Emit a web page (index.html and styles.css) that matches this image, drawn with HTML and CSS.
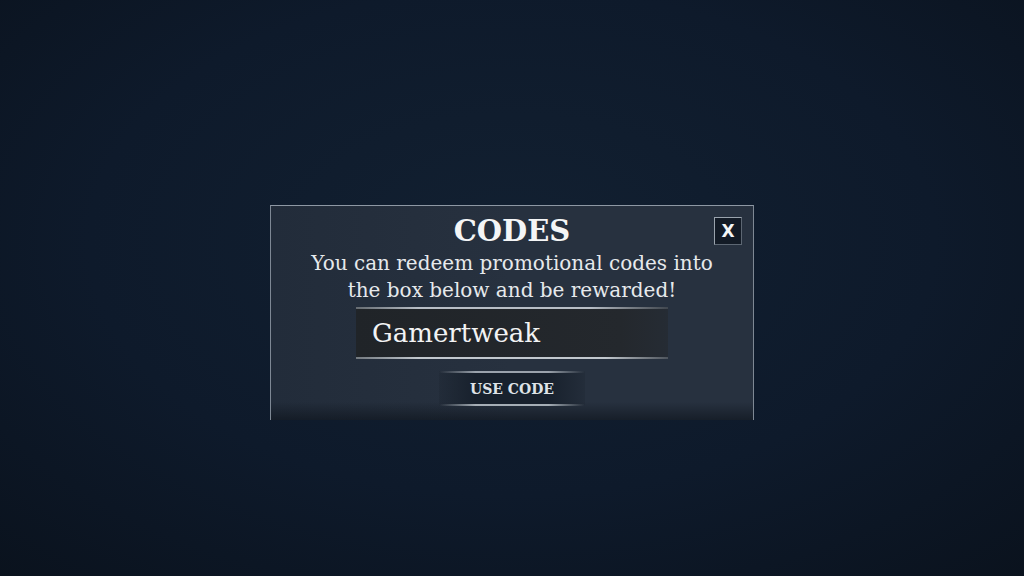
FILE: index.html
```html
<!DOCTYPE html>
<html lang="en">
<head>
<meta charset="utf-8">
<title>Codes</title>
<link rel="stylesheet" href="styles.css">
</head>
<body>
<div class="screen">
  <div class="panel">
    <button class="close" type="button">X</button>
    <h1 class="title">CODES</h1>
    <p class="desc">You can redeem promotional codes into<br>the box below and be rewarded!</p>
    <div class="input"><span class="input-text">Gamertweak</span></div>
    <button class="use" type="button">USE CODE</button>
  </div>
</div>
</body>
</html>
```
FILE: styles.css
```css
html, body {
  margin: 0;
  padding: 0;
  width: 1024px;
  height: 576px;
  overflow: hidden;
}
body {
  background: radial-gradient(ellipse 75% 80% at 50% 42%, #122031 0%, #0e1a2b 55%, #0a121d 100%);
  font-family: "DejaVu Serif", "Liberation Serif", serif;
  color: #eef0f2;
}
.screen {
  display: flex;
  justify-content: center;
  padding-top: 205px;
}
.panel {
  position: relative;
  width: 484px;
  height: 215px;
  box-sizing: border-box;
  border-top: 1px solid #8e98a4;
  border-left: 1px solid #7e8894;
  border-right: 1px solid #7e8894;
  background:
    linear-gradient(to bottom, rgba(0,0,0,0) 0, rgba(0,0,0,0) 196px, rgba(10,16,24,0.6) 215px),
    linear-gradient(to right, #222c3a 0%, #27313f 50%, #27313f 100%);
  display: flex;
  flex-direction: column;
  align-items: center;
}
.title {
  margin: 8px 0 0 0;
  font-size: 29px;
  font-weight: bold;
  line-height: 34px;
  color: #f4f5f6;
}
.desc {
  margin: 2px 0 0 0;
  font-size: 20px;
  line-height: 27px;
  text-align: center;
  color: #e6e9ec;
}
.input {
  margin-top: 3px;
  width: 312px;
  height: 52px;
  box-sizing: border-box;
  position: relative;
  background: linear-gradient(to right, #202428 0%, #24282d 85%, rgba(36,40,45,0.6) 100%);
  display: flex;
  align-items: center;
  padding-left: 16px;
}
.input::before, .input::after, .use::before, .use::after {
  content: "";
  position: absolute;
  left: 0;
  right: 0;
  height: 2px;
}
.input::before { top: 0; background: linear-gradient(to right, rgba(170,178,186,0.5), #b8bec6 20%, #b8bec6 75%, rgba(170,178,186,0.2)); }
.input::after { bottom: 0; background: linear-gradient(to right, rgba(170,178,186,0.6), #c2c8ce 20%, #c2c8ce 80%, rgba(170,178,186,0.3)); }
.input-text {
  font-size: 26px;
  color: #f2f3f4;
}
.use {
  margin-top: 12px;
  position: relative;
  width: 146px;
  height: 35px;
  border: 0;
  padding: 0;
  background: linear-gradient(to right, rgba(22,30,40,0.2) 0%, #18212d 25%, #18212d 75%, rgba(22,30,40,0.2) 100%);
  font-family: "DejaVu Serif", "Liberation Serif", serif;
  font-size: 14px;
  font-weight: bold;
  color: #dfe3e7;
}
.use::before { top: 0; background: linear-gradient(to right, rgba(150,158,166,0), #9aa2ac 25%, #9aa2ac 75%, rgba(150,158,166,0)); }
.use::after { bottom: 0; background: linear-gradient(to right, rgba(150,158,166,0), #a6aeb6 25%, #a6aeb6 75%, rgba(150,158,166,0)); }
.close {
  position: absolute;
  top: 11px;
  right: 11px;
  width: 28px;
  height: 28px;
  box-sizing: border-box;
  border: 1px solid #9aa3ad;
  border-right-color: #5d6773;
  border-bottom-color: #5d6773;
  background: #131b26;
  color: #f4f5f6;
  font-family: "DejaVu Sans", sans-serif;
  font-weight: bold;
  font-size: 17px;
  line-height: 26px;
  padding: 0;
  text-align: center;
}
```
